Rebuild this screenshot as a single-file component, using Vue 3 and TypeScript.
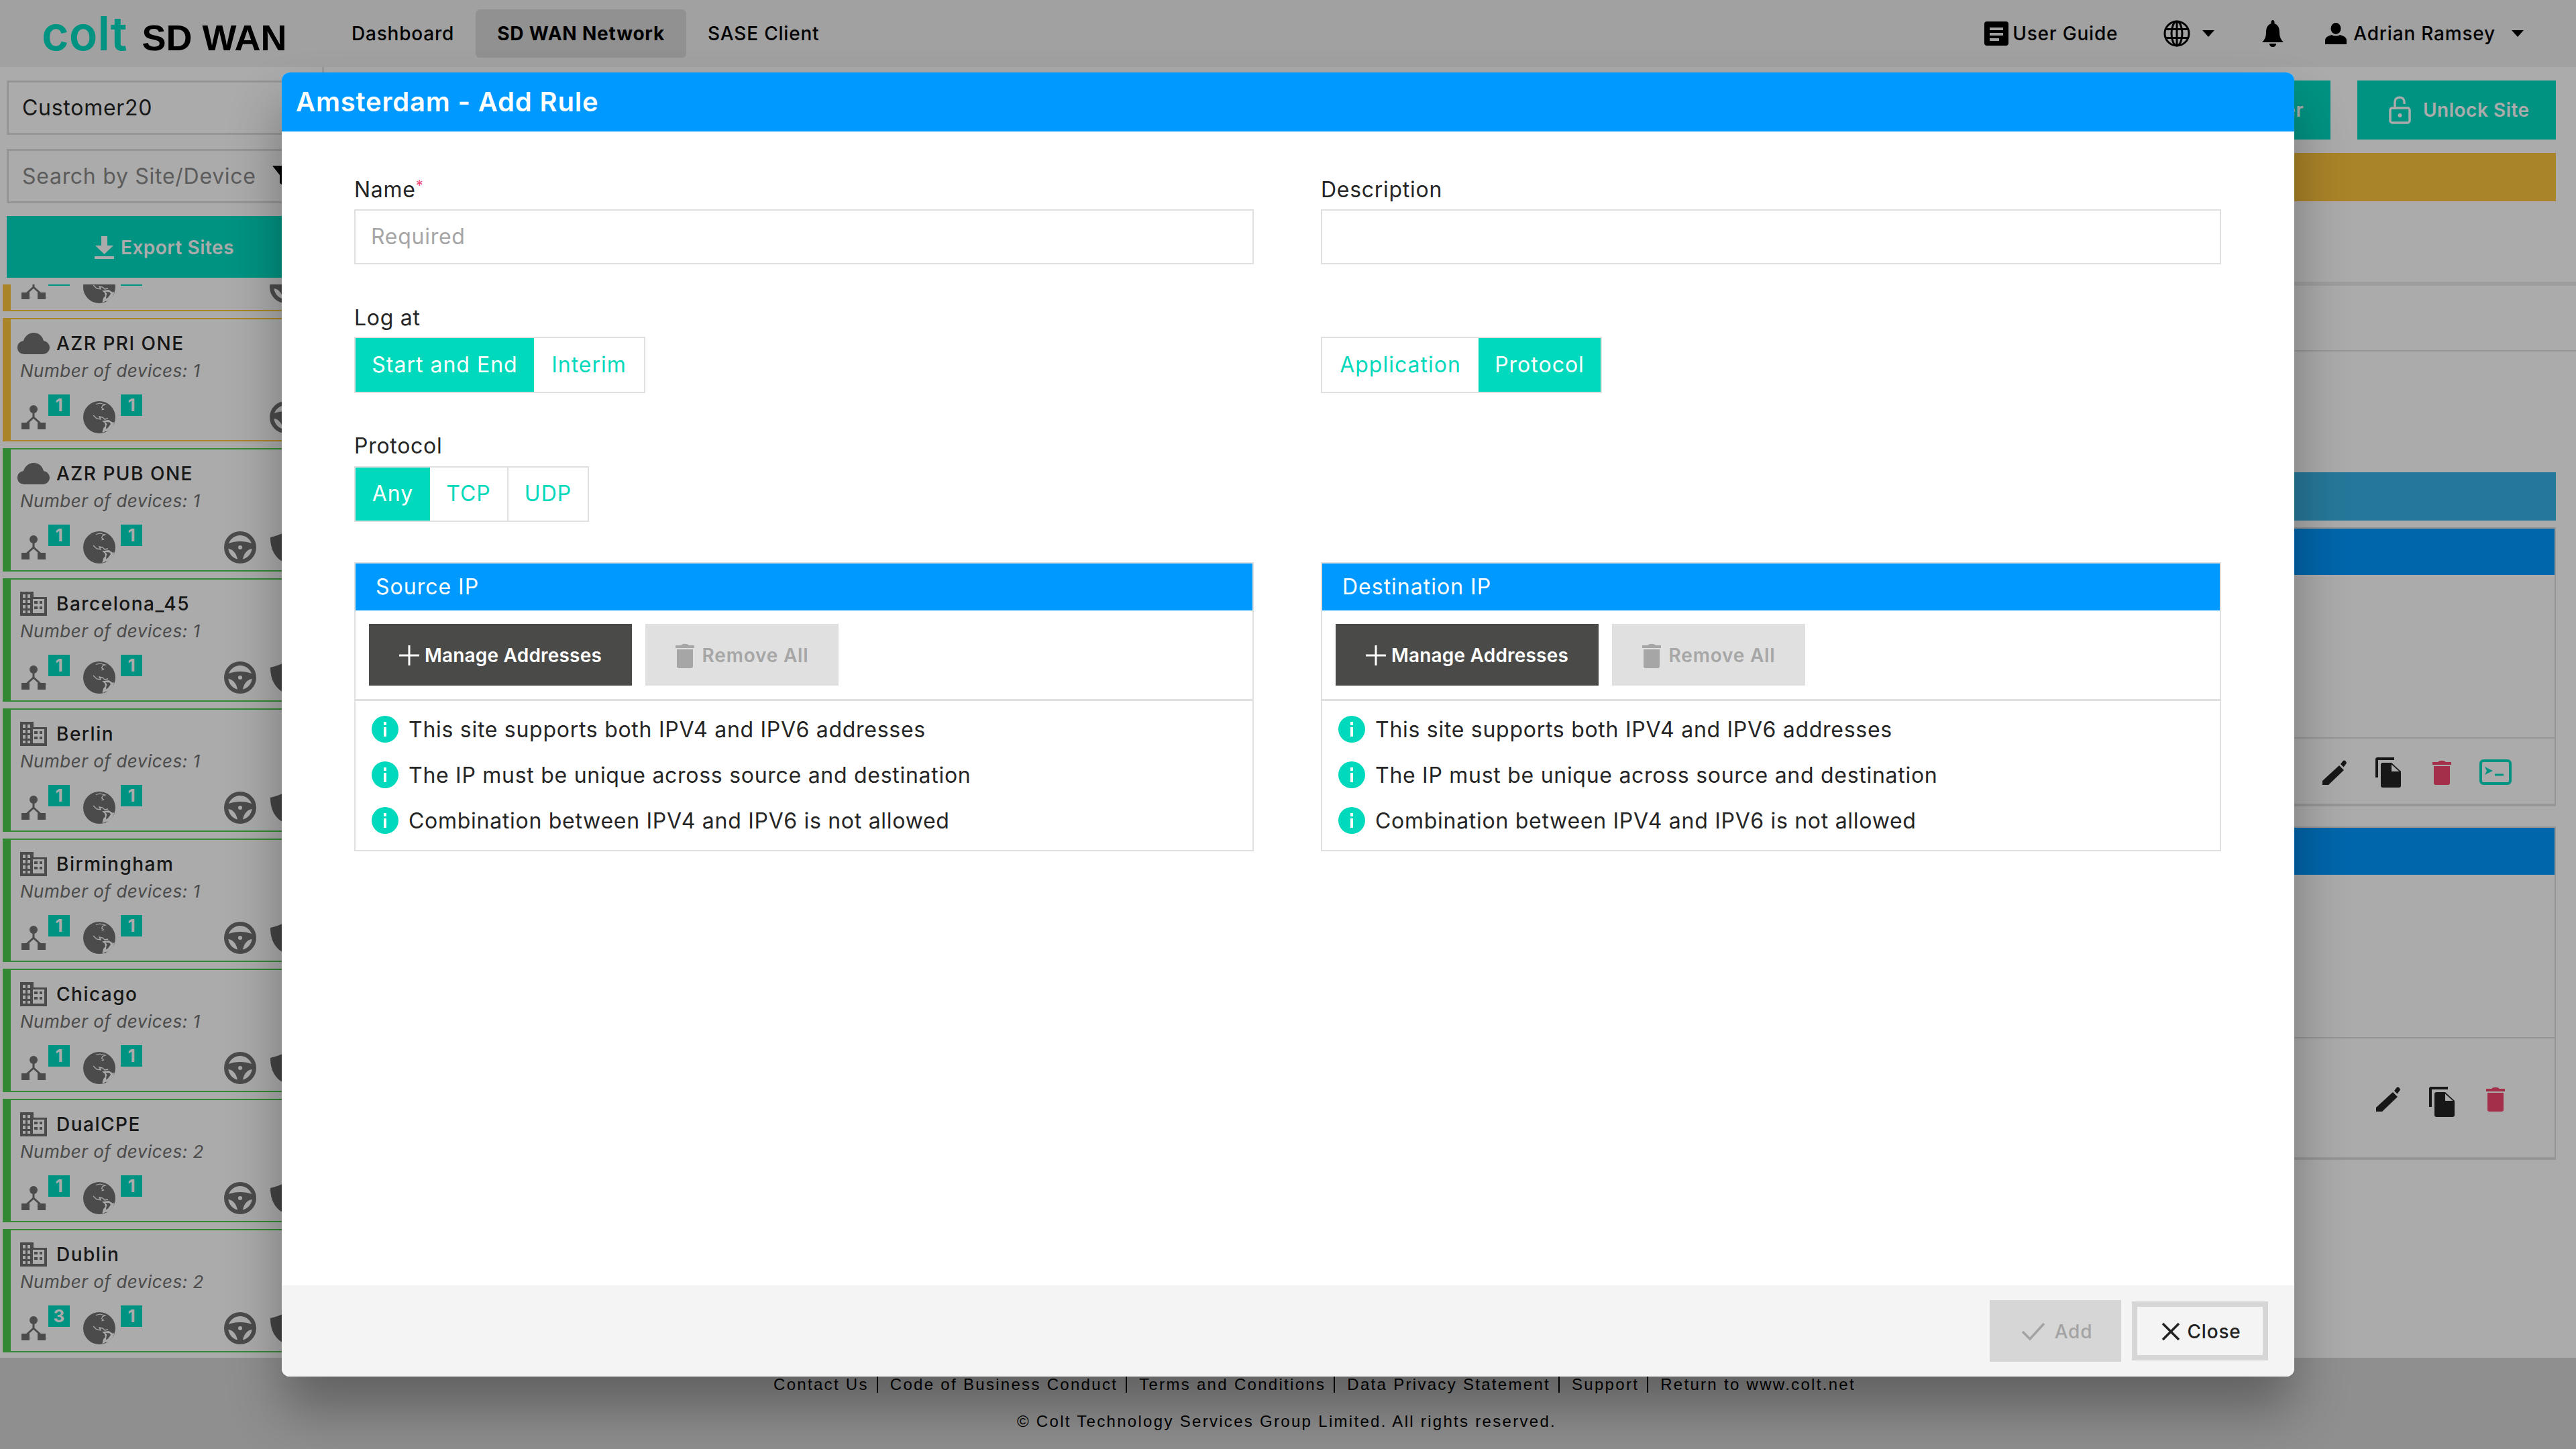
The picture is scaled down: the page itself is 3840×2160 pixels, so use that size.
<script setup lang="ts">
interface Site {
  name: string
  kind: 'cloud' | 'building'
  devices: number
  nodes: number
  tone: 'gold' | 'green'
  shield: boolean
}

const sites: Site[] = [
  { name: 'AZR DEV ONE', kind: 'cloud', devices: 1, nodes: 1, tone: 'gold', shield: false },
  { name: 'AZR PRI ONE', kind: 'cloud', devices: 1, nodes: 1, tone: 'gold', shield: false },
  { name: 'AZR PUB ONE', kind: 'cloud', devices: 1, nodes: 1, tone: 'green', shield: true },
  { name: 'Barcelona_45', kind: 'building', devices: 1, nodes: 1, tone: 'green', shield: true },
  { name: 'Berlin', kind: 'building', devices: 1, nodes: 1, tone: 'green', shield: true },
  { name: 'Birmingham', kind: 'building', devices: 1, nodes: 1, tone: 'green', shield: true },
  { name: 'Chicago', kind: 'building', devices: 1, nodes: 1, tone: 'green', shield: true },
  { name: 'DualCPE', kind: 'building', devices: 2, nodes: 1, tone: 'green', shield: true },
  { name: 'Dublin', kind: 'building', devices: 2, nodes: 3, tone: 'green', shield: true }
]

const footerLinks: string[] = [
  'Contact Us',
  'Code of Business Conduct',
  'Terms and Conditions',
  'Data Privacy Statement',
  'Support',
  'Return to www.colt.net'
]

const ipPanels: string[] = ['Source IP', 'Destination IP']
const ipNotes: string[] = [
  'This site supports both IPV4 and IPV6 addresses',
  'The IP must be unique across source and destination',
  'Combination between IPV4 and IPV6 is not allowed'
]
</script>

<template>
  <div class="page">
    <svg class="defs" width="0" height="0" aria-hidden="true">
      <symbol id="i-node" viewBox="0 0 36 36">
        <circle cx="18" cy="6" r="6" />
        <path d="M16.500 10h3v7.400L30 27l-2 2-10-9-10 9-2-2 10.500-9.600z" />
        <rect x="0" y="26" width="12" height="10" />
        <rect x="24" y="26" width="12" height="10" />
      </symbol>
      <symbol id="i-globe" viewBox="0 0 48 48">
        <circle cx="24" cy="24" r="24" />
        <path d="M19 4.500l6-1.500 8 2-4 1.500-1.500 3 3 2.500-3 1" fill="none" stroke="#fff" stroke-width="1.200" />
        <path d="M15 21l5 5 6 1-2-4 5 1 3 3 5-1" fill="none" stroke="#fff" stroke-width="1.300" />
        <path d="M28 29.500l10-1.500 6.500 4 2-1.500c-1 6-4.500 11-9.500 14l-4 .5-3.500 2-1-1 1.800-6 2.700-3-1-4.500z" fill="#fff" />
        <path d="M33 31l6.500.5 1.500 2.500-4 5.500-3 2 .5-4.500 1-3z" />
      </symbol>
      <symbol id="i-wheel" viewBox="0 0 48 48">
        <path fill-rule="evenodd" d="M24 0a24 24 0 1 0 0 48 24 24 0 0 0 0-48zM24 6c8 0 14.500 5 17 12-5-2-11-3-17-3s-12 1-17 3C9.500 11 16 6 24 6zM6.300 26c6 .5 12 6 13.700 15.500C13 40 7.500 34 6.300 26zM41.700 26c-1.200 8-6.700 14-13.700 15.500C29.700 32 35.700 26.500 41.700 26zM24 21a3 3 0 1 1 0 6 3 3 0 0 1 0-6z" />
      </symbol>
      <symbol id="i-shield" viewBox="0 0 47 48">
        <path d="M0 9C9 7 17 4 23.500 0 30 4 38 7 47 9c0 18-7 32-23.500 39C7 41 0 27 0 9z" />
      </symbol>
      <symbol id="i-cloud" viewBox="0 0 48 32">
        <path d="M11 32C4 32 0 28 0 22s4-9 9-10C11 5 17 0 24 0s13 4 15 12c5 1 9 5 9 10 0 6-5 10-11 10z" />
      </symbol>
      <symbol id="i-building" viewBox="0 0 40 36">
        <path fill-rule="evenodd" d="M0 0h20v8h20v28H0zM4 4v5h4V4zm7 0v5h4V4zM4 12v5h4v-5zm7 0v5h4v-5zM4 20v5h4v-5zm7 0v5h4v-5zM4 28v4h4v-4zm7 0v4h4v-4zM19 11v21h17V11z" />
        <path d="M21 14h5v4h-5zM21 22h5v4h-5zM29 14h4v4h-4zM29 22h4v4h-4z" />
      </symbol>
      <symbol id="i-trash" viewBox="0 0 28 37">
        <path d="M0 3h8c3-3 9-3 12 0h8v4H0zM2 9h24v25c0 2-1 3-3 3H5c-2 0-3-1-3-3z" />
      </symbol>
      <symbol id="i-pencil" viewBox="0 0 36 37">
        <path d="M0 31 25 8l7 7L9 37H0zM27 6l3.500-4.500c1-1.500 2.500-1.500 4 0l1 1.500c.500 1 .5 2-.5 3l-3.500 4.500z" />
      </symbol>
      <symbol id="i-copy" viewBox="0 0 38 45">
        <path d="M3 0h25v4H4v26H0V3c0-2 1-3 3-3z" />
        <path d="M11 8h13l14 13v21c0 2-1 3-3 3H11c-2 0-3-1-3-3V11c0-2 1-3 3-3z" />
        <path d="M24 10.500 35.500 21H24z" fill="#fff" />
      </symbol>
    </svg>

    <header class="topbar">
      <div class="brand">
        <span class="brand-mark">colt</span>
        <span class="brand-name">SD WAN</span>
      </div>
      <nav class="mainnav">
        <a class="navlink">Dashboard</a>
        <a class="navlink navlink-active">SD WAN Network</a>
        <a class="navlink">SASE Client</a>
      </nav>
      <div class="usernav">
        <span class="guide">
          <svg class="guide-icon" viewBox="0 0 36 36">
            <rect width="36" height="36" rx="4" fill="#000" />
            <path d="M8 9h20v4H8zM8 17h20v4H8zM8 25h14v4H8z" fill="#f0f0f0" />
          </svg>
          User Guide
        </span>
        <span class="lang">
          <svg class="lang-icon" viewBox="0 0 40 40" fill="none" stroke="#000" stroke-width="3">
            <circle cx="20" cy="20" r="18" />
            <ellipse cx="20" cy="20" rx="8" ry="18" />
            <path d="M20 2v36M3 13.500h34M3 26.500h34" />
          </svg>
          <i class="caret"></i>
        </span>
        <svg class="bell" viewBox="0 0 32 40">
          <path d="M16 0c1.500 0 2.500 1 2.500 3v2C24 7 26 12 26 18c0 7 2 11 6 15H0c4-4 6-8 6-15 0-6 2-11 7.500-13V3c0-2 1-3 2.500-3zM11 35h10c0 3-2 5-5 5s-5-2-5-5z" fill="#000" />
        </svg>
        <span class="user">
          <svg class="user-icon" viewBox="0 0 32 32">
            <ellipse cx="16" cy="8.500" rx="7.500" ry="8.500" fill="#000" />
            <path d="M0 32v-6c0-5 6-7 10-8 3 2 9 2 12 0 4 1 10 3 10 8v6z" fill="#000" />
          </svg>
          Adrian Ramsey
          <i class="caret caret-user"></i>
        </span>
      </div>
    </header>

    <div class="workspace">
      <aside class="sidebar">
        <div class="field">Customer20</div>
        <div class="field field-search">
          <span>Search by Site/Device</span>
          <svg class="funnel" viewBox="0 0 30 32"><path d="M0 0h30L19 14v18l-8-6V14z" fill="#000" /></svg>
        </div>
        <button class="export" type="button">
          <svg class="export-icon" viewBox="0 0 29 34" fill="#fff">
            <path d="M10 0h9v14h9L14.500 27 1 14h9zM0 30h29v4H0z" />
          </svg>
          Export Sites
        </button>
        <div class="sitelist">
          <div class="siteinner">
            <article v-for="s in sites" :key="s.name" class="card" :class="'card-' + s.tone">
              <div class="card-title">
                <span class="kind">
                  <svg v-if="s.kind === 'cloud'" class="ic-cloud"><use href="#i-cloud" /></svg>
                  <svg v-else class="ic-building"><use href="#i-building" /></svg>
                </span>
                {{ s.name }}
              </div>
              <div class="card-sub">Number of devices: {{ s.devices }}</div>
              <div class="card-row">
                <svg class="ic-node"><use href="#i-node" /></svg>
                <span class="badge badge-node">{{ s.nodes }}</span>
                <svg class="ic-globe"><use href="#i-globe" /></svg>
                <span class="badge badge-globe">1</span>
                <span class="card-actions">
                  <svg class="ic-wheel"><use href="#i-wheel" /></svg>
                  <svg v-if="s.shield" class="ic-shield"><use href="#i-shield" /></svg>
                </span>
              </div>
            </article>
          </div>
        </div>
      </aside>

      <main class="content">
        <div class="toolbar">
          <button class="tool" type="button">Edit Cluster</button>
          <button class="tool tool-unlock" type="button">
            <svg class="lock" viewBox="0 0 33 42" fill="none" stroke="#fff" stroke-width="3.500">
              <path d="M9 20V9c0-9 14-9 14 0v3" />
              <rect x="2" y="18" width="29" height="22" rx="3" />
              <circle cx="16.500" cy="29" r="3" fill="#fff" stroke="none" />
            </svg>
            Unlock Site
          </button>
        </div>
        <div class="alert"></div>
        <div class="tabline"></div>
        <div class="subline"></div>
        <div class="strip"></div>
        <section class="rule rule-a">
          <div class="rule-head"></div>
          <div class="rule-body"></div>
          <div class="rule-foot">
            <span class="act"><svg class="ic-pencil"><use href="#i-pencil" /></svg></span>
            <span class="act"><svg class="ic-copy"><use href="#i-copy" /></svg></span>
            <span class="act"><svg class="ic-trash"><use href="#i-trash" /></svg></span>
            <span class="act">
              <svg class="terminal" viewBox="0 0 48 38" fill="none" stroke="#00dcc2">
                <rect x="2" y="2" width="44" height="34" rx="4" stroke-width="4" />
                <path d="M8 11l12 6-12 6 3-6z" fill="#00dcc2" stroke="none" />
                <path d="M23 23h13" stroke-width="3" />
              </svg>
            </span>
          </div>
        </section>
        <section class="rule rule-b">
          <div class="rule-head"></div>
          <div class="rule-body rule-body-b"></div>
          <div class="rule-foot rule-foot-b">
            <span class="act"><svg class="ic-pencil"><use href="#i-pencil" /></svg></span>
            <span class="act"><svg class="ic-copy"><use href="#i-copy" /></svg></span>
            <span class="act"><svg class="ic-trash"><use href="#i-trash" /></svg></span>
          </div>
        </section>
      </main>
    </div>

    <footer class="pagefoot">
      <div class="footlinks">
        <a v-for="l in footerLinks" :key="l" class="footlink">{{ l }}</a>
      </div>
      <div class="copyright">© Colt Technology Services Group Limited. All rights reserved.</div>
    </footer>

    <div class="overlay">
      <div class="modal">
        <div class="modal-head">Amsterdam - Add Rule</div>
        <div class="modal-body">
          <div class="cols">
            <div>
              <label class="lbl">Name<sup class="req">*</sup></label>
              <div class="inp inp-ph">Required</div>
            </div>
            <div>
              <label class="lbl">Description</label>
              <div class="inp"></div>
            </div>
          </div>
          <div class="cols cols-log">
            <div>
              <label class="lbl lbl-log">Log at</label>
              <div class="seg">
                <span class="seg-btn seg-on seg-start">Start and End</span>
                <span class="seg-btn seg-interim">Interim</span>
              </div>
            </div>
            <div class="col-end">
              <div class="seg">
                <span class="seg-btn seg-app">Application</span>
                <span class="seg-btn seg-on seg-proto">Protocol</span>
              </div>
            </div>
          </div>
          <label class="lbl lbl-proto">Protocol</label>
          <div class="seg seg-short">
            <span class="seg-btn seg-on seg-any">Any</span>
            <span class="seg-btn seg-tcp">TCP</span>
            <span class="seg-btn seg-udp">UDP</span>
          </div>
          <div class="cols cols-ip">
            <section v-for="p in ipPanels" :key="p" class="ip">
              <div class="ip-head">{{ p }}</div>
              <div class="ip-actions">
                <button class="btn-manage" type="button">
                  <svg class="plus" viewBox="0 0 30 30"><path d="M13.500 0h3v13.500H30v3H16.500V30h-3V16.500H0v-3h13.500z" fill="#fff" /></svg>
                  Manage Addresses
                </button>
                <button class="btn-remove" type="button">
                  <svg class="ic-remove"><use href="#i-trash" /></svg>
                  Remove All
                </button>
              </div>
              <ul class="notes">
                <li v-for="n in ipNotes" :key="n" class="note">
                  <svg class="info" viewBox="0 0 40 40">
                    <circle cx="20" cy="20" r="20" fill="#00d9bb" />
                    <rect x="18" y="9" width="4" height="5" fill="#fff" />
                    <rect x="18" y="17" width="4" height="14" fill="#fff" />
                  </svg>
                  {{ n }}
                </li>
              </ul>
            </section>
          </div>
        </div>
        <div class="modal-foot">
          <button class="btn-add" type="button">
            <svg class="check" viewBox="0 0 36 28" fill="none" stroke="#a3a3a3" stroke-width="3.500"><path d="M2 14l11 11L34 2" /></svg>
            Add
          </button>
          <button class="btn-close" type="button">
            <svg class="cross" viewBox="0 0 28 28" fill="none" stroke="#222" stroke-width="3.500"><path d="M2 2l24 24M26 2L2 26" /></svg>
            Close
          </button>
        </div>
      </div>
    </div>
  </div>
</template>

<style>
html,
body {
  margin: 0;
  padding: 0;
  background: #fff;
}
</style>

<style scoped>
.page {
  position: relative;
  width: 3840px;
  height: 2160px;
  overflow: hidden;
  display: flex;
  flex-direction: column;
  background: #fff;
  color: #252525;
  font-family: Inter, "Noto Sans", sans-serif;
  font-size: 32px;
  letter-spacing: 0.72px;
}
.defs {
  position: absolute;
}
button {
  font-family: inherit;
  letter-spacing: inherit;
  border: 0;
  cursor: default;
}

/* top bar */
.topbar {
  height: 100px;
  flex: none;
  display: flex;
  align-items: center;
  background: #f0f0f0;
  color: #000;
}
.brand {
  display: flex;
  align-items: baseline;
  margin-left: 62px;
  width: 462px;
  flex: none;
}
.brand-mark {
  color: #00dcc2;
  font-size: 70px;
  font-weight: 600;
  letter-spacing: 0;
  line-height: 100px;
}
.brand-name {
  margin-left: 22px;
  font-family: "Liberation Sans", sans-serif;
  font-weight: 700;
  font-size: 54px;
  letter-spacing: 0;
}
.mainnav {
  display: flex;
  align-items: center;
  letter-spacing: 0.8px;
}
.navlink {
  font-size: 28px;
  font-weight: 500;
  padding: 0 32px;
  line-height: 72px;
  border-radius: 6px;
}
.navlink:first-child {
  padding-left: 0;
}
.navlink-active {
  background: #d8d8d8;
  font-weight: 700;
}
.usernav {
  margin-left: auto;
  display: flex;
  align-items: center;
  font-size: 28px;
  font-weight: 500;
  letter-spacing: 0.8px;
  padding-right: 78px;
}
.guide {
  display: flex;
  align-items: center;
  gap: 6px;
}
.guide-icon {
  width: 36px;
  height: 36px;
}
.lang {
  display: flex;
  align-items: center;
  margin-left: 68px;
}
.lang-icon {
  width: 40px;
  height: 40px;
}
.caret {
  display: inline-block;
  width: 0;
  height: 0;
  margin-left: 18px;
  border-left: 9.500px solid transparent;
  border-right: 9.500px solid transparent;
  border-top: 10px solid #000;
}
.caret-user {
  margin-left: 14px;
}
.bell {
  width: 32px;
  height: 40px;
  margin-left: 71px;
}
.user {
  display: flex;
  align-items: center;
  margin-left: 62px;
  gap: 10px;
}
.user-icon {
  width: 32px;
  height: 32px;
}

/* workspace */
.workspace {
  flex: 1;
  display: flex;
  min-height: 0;
}
.sidebar {
  width: 483px;
  flex: none;
  box-sizing: border-box;
  border-right: 3px solid #e6e6e6;
  display: flex;
  flex-direction: column;
  padding-top: 20px;
}
.field {
  margin: 0 0 21px 10px;
  width: 470px;
  height: 81px;
  box-sizing: border-box;
  border: 3px solid #dedede;
  padding-left: 20px;
  display: flex;
  align-items: center;
  font-size: 32px;
}
.field-search {
  color: #8a8a8a;
  margin-bottom: 19px;
  justify-content: space-between;
  padding-right: 41px;
}
.funnel {
  width: 30px;
  height: 32px;
  flex: none;
}
.export {
  margin-left: 10px;
  width: 470px;
  height: 92px;
  flex: none;
  display: flex;
  align-items: center;
  justify-content: center;
  gap: 10px;
  padding-top: 2px;
  background: #00dcc2;
  color: #fff;
  font-size: 28px;
  font-weight: 600;
  letter-spacing: 0.5px;
}
.export-icon {
  width: 29px;
  height: 34px;
}
.sitelist {
  margin-top: 10px;
  flex: 1;
  min-height: 0;
  overflow: hidden;
  padding-left: 4px;
}
.siteinner {
  margin-top: -144px;
}
.card {
  height: 184px;
  width: 476px;
  box-sizing: border-box;
  margin-bottom: 10px;
  padding: 18px 28px 10px 10px;
  border: 2px solid;
  border-left-width: 12px;
  display: flex;
  flex-direction: column;
  color: #232323;
}
.card-gold {
  border-color: #fec53c;
}
.card-green {
  border-color: #4ccb4c;
}
.card-title {
  height: 36px;
  display: flex;
  align-items: center;
  gap: 10px;
  font-size: 28px;
  font-weight: 500;
  letter-spacing: 1.5px;
  white-space: nowrap;
}
.kind {
  width: 48px;
  height: 36px;
  display: flex;
  align-items: center;
  justify-content: center;
}
.ic-cloud {
  width: 48px;
  height: 32px;
  fill: #707070;
}
.ic-building {
  width: 40px;
  height: 36px;
  fill: #707070;
}
.card-sub {
  font-size: 26px;
  line-height: 36px;
  margin: 5px 0 0 4px;
  font-style: italic;
  letter-spacing: 0.5px;
  color: #707070;
}
.card-row {
  margin-top: 17px;
  height: 58px;
  display: flex;
  align-items: flex-end;
}
.ic-node {
  width: 36px;
  height: 36px;
  margin: 0 4px 6px 6px;
  fill: #707070;
}
.badge {
  width: 32px;
  height: 32px;
  align-self: flex-start;
  background: #00dcc2;
  color: #fff;
  font-size: 26px;
  font-weight: 700;
  letter-spacing: 0;
  line-height: 32px;
  text-align: center;
}
.ic-globe {
  width: 48px;
  height: 48px;
  margin: 0 8px 0 20px;
  fill: #707070;
}
.card-actions {
  margin-left: auto;
  display: flex;
  gap: 21px;
}
.ic-wheel {
  width: 48px;
  height: 48px;
  fill: #707070;
}
.ic-shield {
  width: 47px;
  height: 48px;
  fill: #666;
}

/* right content */
.content {
  flex: 1;
  min-width: 0;
  padding: 20px 30px 0 20px;
  display: flex;
  flex-direction: column;
}
.toolbar {
  display: flex;
  justify-content: flex-end;
  gap: 40px;
}
.tool {
  height: 88px;
  padding: 0 40px;
  display: flex;
  align-items: center;
  background: #00dcc2;
  color: #fff;
  font-size: 28px;
  font-weight: 600;
  letter-spacing: 0.5px;
}
.tool-unlock {
  width: 296px;
  box-sizing: border-box;
  gap: 18px;
  padding: 0 0 0 47px;
}
.lock {
  width: 33px;
  height: 42px;
}
.alert {
  height: 72px;
  margin-top: 20px;
  background: #fec53c;
}
.tabline {
  height: 6px;
  margin: 120px -30px 0 0;
  background: #ebebeb;
}
.subline {
  height: 2px;
  margin: 96px -30px 0 0;
  background: #e2e2e2;
}
.strip {
  height: 72px;
  margin-top: 180px;
  background: #39b3e6;
}
.rule {
  box-sizing: border-box;
  border: 2px solid #e0e0e0;
  border-bottom-width: 4px;
  display: flex;
  flex-direction: column;
}
.rule-a {
  margin-top: 10px;
  height: 416px;
}
.rule-b {
  margin-top: 30px;
  height: 497px;
}
.rule-head {
  height: 70px;
  background: #0099ff;
}
.rule-body {
  height: 243px;
  border-bottom: 2px solid #e0e0e0;
}
.rule-body-b {
  height: 243px;
}
.rule-foot {
  display: flex;
  justify-content: flex-end;
  align-items: center;
  height: 98px;
  padding: 4px 48px 0 0;
  box-sizing: border-box;
}
.rule-foot-b {
  height: 178px;
  align-items: flex-start;
  padding-top: 72px;
}
.act {
  width: 80px;
  display: flex;
  justify-content: center;
}
.ic-pencil {
  width: 36px;
  height: 37px;
  fill: #232323;
}
.ic-copy {
  width: 38px;
  height: 45px;
  fill: #232323;
}
.ic-trash {
  width: 28px;
  height: 37px;
  fill: #f3466f;
}
.terminal {
  width: 48px;
  height: 38px;
}

/* page footer */
.pagefoot {
  height: 136px;
  flex: none;
  background: #d5d5d5;
  color: #000;
  font-family: "Liberation Sans", sans-serif;
  font-size: 24px;
  letter-spacing: 2.3px;
  text-align: center;
}
.footlinks {
  margin: 27px 0 0 73px;
  display: flex;
  justify-content: center;
}
.footlink {
  line-height: 25px;
  padding: 0 12px 0 18px;
  border-right: 2px solid #000;
}
.footlink:last-child {
  border-right: 0;
}
.copyright {
  margin-top: 30px;
  line-height: 25px;
  margin-left: -4px;
}

/* modal */
.overlay {
  position: absolute;
  inset: 0;
  background: rgba(0, 0, 0, 0.33);
  display: flex;
  align-items: center;
  justify-content: center;
}
.modal {
  width: 3000px;
  height: 1944px;
  background: #fff;
  border-radius: 12px;
  overflow: hidden;
  display: flex;
  flex-direction: column;
  box-shadow: 0 50px 80px rgba(0, 0, 0, 0.32);
}
.modal-head {
  height: 88px;
  flex: none;
  box-sizing: border-box;
  padding-left: 21px;
  background: #0099ff;
  color: #fff;
  font-size: 40px;
  font-weight: 600;
  letter-spacing: 0.8px;
  line-height: 88px;
}
.modal-body {
  flex: 1;
  min-height: 0;
  padding: 67px 109px 0 108px;
}
.cols {
  display: grid;
  grid-template-columns: 1341px 1342px;
  column-gap: 100px;
}
.lbl {
  display: block;
  line-height: 40px;
  margin-bottom: 9px;
}
.req {
  color: #f04c7c;
  font-size: 22px;
  line-height: 0;
  vertical-align: 10px;
}
.inp {
  height: 82px;
  box-sizing: border-box;
  border: 2px solid #e0e0e0;
  padding-left: 23px;
  line-height: 78px;
}
.inp-ph {
  color: #a6a6a6;
}
.cols-log {
  margin-top: 60px;
}
.lbl-log {
  margin-bottom: 8px;
}
.col-end {
  display: flex;
  align-items: flex-end;
}
.seg {
  display: inline-flex;
  height: 84px;
  box-sizing: border-box;
  border: 2px solid #e0e0e0;
  vertical-align: top;
  letter-spacing: 1px;
}
.seg-btn {
  display: flex;
  align-items: center;
  justify-content: center;
  padding-bottom: 2px;
  color: #00d9bb;
  box-sizing: border-box;
}
.seg-on {
  background: #00d9bb;
  color: #fff;
}
.seg-start {
  width: 266px;
}
.seg-interim {
  width: 164px;
}
.seg-app {
  width: 233px;
}
.seg-proto {
  width: 182px;
}
.lbl-proto {
  margin-top: 59px;
  margin-bottom: 10px;
}
.seg-short {
  height: 83px;
}
.seg-any {
  width: 111px;
}
.seg-tcp {
  width: 117px;
  border-right: 2px solid #e0e0e0;
}
.seg-udp {
  width: 118px;
}
.cols-ip {
  margin-top: 60px;
}
.ip {
  height: 431px;
  box-sizing: border-box;
  border: 2px solid #e0e0e0;
}
.ip-head {
  height: 70px;
  padding-left: 30px;
  background: #0099ff;
  color: #fff;
  letter-spacing: 1px;
  line-height: 70px;
}
.ip-actions {
  display: flex;
  gap: 20px;
  padding: 20px;
  border-bottom: 3px solid #e0e0e0;
  height: 92px;
}
.btn-manage,
.btn-remove {
  height: 92px;
  display: flex;
  align-items: center;
  font-size: 28px;
  font-weight: 600;
  padding: 2px 0 0;
  justify-content: center;
}
.btn-manage {
  width: 392px;
  gap: 8px;
  background: #4a4b49;
  color: #fff;
  letter-spacing: 0.2px;
}
.plus {
  width: 30px;
  height: 30px;
}
.btn-remove {
  width: 288px;
  gap: 12px;
  background: #e0e0e0;
  color: #a6a6a6;
  letter-spacing: 0.8px;
}
.ic-remove {
  width: 28px;
  height: 37px;
  fill: #a6a6a6;
}
.notes {
  list-style: none;
  margin: 0;
  padding: 8px 0 0 24px;
}
.note {
  height: 68px;
  display: flex;
  align-items: center;
  gap: 15px;
  white-space: nowrap;
}
.info {
  width: 40px;
  height: 40px;
  flex: none;
}
.modal-foot {
  height: 136px;
  flex: none;
  box-sizing: border-box;
  background: #f4f4f4;
  display: flex;
  align-items: center;
  justify-content: flex-end;
  gap: 16px;
  padding-right: 39px;
}
.btn-add {
  width: 196px;
  height: 92px;
  background: #d6d6d6;
  color: #a3a3a3;
  font-size: 28px;
  font-weight: 500;
  letter-spacing: 0.8px;
  display: flex;
  align-items: center;
  justify-content: center;
  gap: 14px;
  padding: 2px 0 0 4px;
}
.check {
  width: 36px;
  height: 28px;
}
.btn-close {
  width: 203px;
  height: 88px;
  box-sizing: border-box;
  border: 8px solid #d6d6d6;
  background: #f4f4f4;
  color: #222;
  font-size: 28px;
  font-weight: 500;
  letter-spacing: 0.8px;
  display: flex;
  align-items: center;
  justify-content: center;
  gap: 10px;
  padding: 2px 0 0 4px;
}
.cross {
  width: 28px;
  height: 28px;
}
</style>
